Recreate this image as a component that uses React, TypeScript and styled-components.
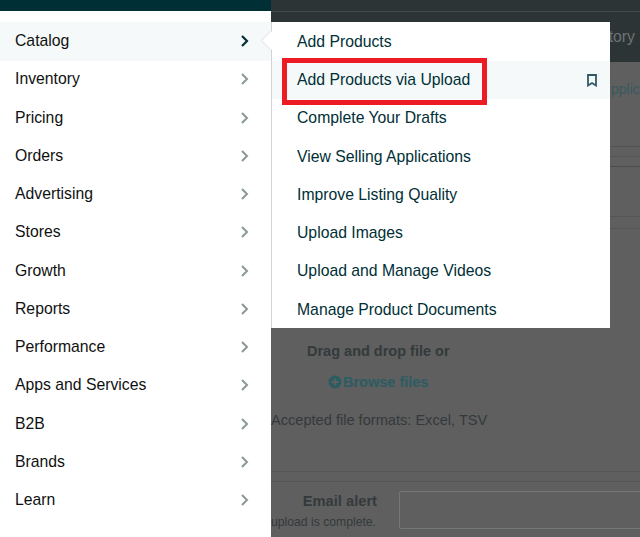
import React from "react";
import styled, { createGlobalStyle } from "styled-components";

const Global = createGlobalStyle`
  html, body { margin: 0; padding: 0; width: 640px; height: 537px; overflow: hidden; background: #5f5f5f; }
  * { box-sizing: border-box; }
  body { font-family: "Liberation Sans", Arial, sans-serif; }
`;

const Page = styled.div`
  position: relative;
  display: flex;
  width: 640px;
  height: 537px;
  overflow: hidden;
`;

const Sidebar = styled.nav`
  flex: 0 0 271px;
  display: flex;
  flex-direction: column;
  background: #fff;
`;

const TopStrip = styled.div`
  height: 11px;
  margin-bottom: 11px;
  background: #002f36;
`;

const NavRow = styled.div<{ $active?: boolean }>`
  height: 38.25px;
  flex: none;
  display: flex;
  align-items: center;
  justify-content: space-between;
  padding: 0 20px 0 15px;
  font-size: 15.75px;
  color: #0f1111;
  background: ${(p) => (p.$active ? "#f5f9f9" : "transparent")};
  box-shadow: ${(p) => (p.$active ? "0 1px 0 #f5f9f9" : "none")};
`;

const Chevron = styled.svg<{ $active?: boolean }>`
  width: 12px;
  height: 14px;
  fill: none;
  stroke: ${(p) => (p.$active ? "#002f36" : "#8a9898")};
  stroke-width: ${(p) => (p.$active ? 2.2 : 2)};
`;

const Backdrop = styled.main`
  flex: 1;
  min-width: 0;
  display: flex;
  flex-direction: column;
  background: #5f5f5f;
`;

const DarkHeader = styled.div`
  height: 62px;
  flex: none;
  background: #2c3436;
  border-top: 11px solid #2c3436;
  position: relative;
  display: flex;
  justify-content: flex-end;
  align-items: center;
  padding: 1px 5px 0 0;
  color: #6c7374;
  font-size: 15.75px;
  &::before {
    content: "";
    position: absolute;
    left: 0;
    right: 0;
    top: 0;
    height: 1px;
    background: #424a4b;
  }
`;

const ApplicLine = styled.div`
  height: 85px;
  flex: none;
  padding: 19px 0 0 340px;
  color: #38585e;
  font-size: 14px;
  line-height: 16px;
  white-space: nowrap;
  overflow: hidden;
  border-bottom: 1px solid #525252;
`;

const Rule = styled.div<{ $h: number; $dark?: boolean }>`
  height: ${(p) => p.$h}px;
  flex: none;
  border-bottom: 1px solid ${(p) => (p.$dark ? "#4c4c4c" : "#555555")};
`;

const Drop = styled.div`
  flex: none;
  height: 242px;
  display: flex;
  flex-direction: column;
  align-items: flex-start;
  padding-top: 114px;
  color: #333a3b;
  font-size: 14.5px;
`;

const DropTitle = styled.div`
  margin-left: 36px;
  font-weight: 700;
  line-height: 16px;
`;

const Browse = styled.div`
  display: flex;
  align-items: center;
  margin: 15px 0 0 57px;
  color: #2a5c62;
  font-weight: 700;
  line-height: 16px;
`;

const PlusIcon = styled.svg`
  width: 14px;
  height: 14px;
  margin-right: 1px;
`;

const Formats = styled.div`
  margin-top: 22px;
  font-size: 14.6px;
  font-weight: 400;
  line-height: 17px;
  white-space: nowrap;
`;

const Divider = styled.div`
  height: 11px;
  flex: none;
  border-top: 1px solid #565656;
  border-bottom: 1px solid #565656;
`;

const AlertRow = styled.div`
  display: flex;
  gap: 16px;
  padding-top: 9px;
`;

const AlertLabel = styled.div`
  flex: 0 0 112px;
  text-align: right;
  color: #333a3b;
  overflow: hidden;
`;

const AlertTitle = styled.div`
  font-size: 14.7px;
  font-weight: 700;
  line-height: 20px;
  padding-right: 6px;
`;

const AlertHint = styled.div`
  font-size: 12.2px;
  line-height: 16px;
  margin-top: 3px;
  white-space: nowrap;
  display: flex;
  justify-content: flex-end;
  padding-right: 7px;
`;

const AlertInput = styled.div`
  flex: 1;
  height: 38px;
  margin-right: -4px;
  border: 1px solid #727878;
  border-radius: 2px;
`;

const Flyout = styled.div`
  position: absolute;
  left: 271px;
  top: 22px;
  width: 339px;
  height: 306px;
  padding-top: 0.85px;
  background: #fff;
  border-left: 1px solid #cfd4d4;
`;

const Pointer = styled.div`
  position: absolute;
  left: -7px;
  top: 12px;
  width: 13px;
  height: 13px;
  background: #fff;
  transform: rotate(45deg);
  box-shadow: -1px 1px 2px rgba(0, 0, 0, 0.08);
`;

const SubRow = styled.div<{ $active?: boolean }>`
  position: relative;
  height: 38.25px;
  display: flex;
  align-items: center;
  justify-content: space-between;
  padding: 0 12px 0 25px;
  font-size: 15.75px;
  color: #002f36;
  background: ${(p) => (p.$active ? "#f5f9f9" : "transparent")};
`;

const BookmarkIcon = styled.svg`
  width: 12px;
  height: 14px;
  fill: none;
  stroke: #2f5a64;
  stroke-width: 1.8;
`;

const Highlight = styled.div`
  position: absolute;
  left: 282px;
  top: 58px;
  width: 205px;
  height: 47px;
  border: 5px solid #ed1c24;
  pointer-events: none;
`;

const nav = ["Catalog","Inventory","Pricing","Orders","Advertising","Stores","Growth","Reports","Performance","Apps and Services","B2B","Brands","Learn"];
const sub = ["Add Products","Add Products via Upload","Complete Your Drafts","View Selling Applications","Improve Listing Quality","Upload Images","Upload and Manage Videos","Manage Product Documents"];

export default function App() {
  return (
    <Page>
      <Global />
      <Sidebar>
        <TopStrip />
        {nav.map((n, i) => (
          <NavRow key={n} $active={i === 0}>
            {n}
            <Chevron $active={i === 0} viewBox="0 0 12 14">
              <path d="M3 2l5 5-5 5" />
            </Chevron>
          </NavRow>
        ))}
      </Sidebar>
      <Backdrop>
        <DarkHeader>tory</DarkHeader>
        <ApplicLine>pplic</ApplicLine>
        <Rule $h={10} />
        <Rule $h={10} $dark />
        <Rule $h={50} />
        <Rule $h={12} />
        <Drop>
          <DropTitle>Drag and drop file or</DropTitle>
          <Browse>
            <PlusIcon viewBox="0 0 14 14">
              <circle cx="7" cy="7" r="6.5" fill="#2a5c62" />
              <path d="M7 3.5v7M3.5 7h7" stroke="#5f5f5f" strokeWidth="1.8" />
            </PlusIcon>
            Browse files
          </Browse>
          <Formats>Accepted file formats: Excel, TSV</Formats>
        </Drop>
        <Divider />
        <AlertRow>
          <AlertLabel>
            <AlertTitle>Email alert</AlertTitle>
            <AlertHint>upload is complete.</AlertHint>
          </AlertLabel>
          <AlertInput />
        </AlertRow>
      </Backdrop>
      <Flyout>
        <Pointer />
        {sub.map((s, i) => (
          <SubRow key={s} $active={i === 1}>
            {s}
            {i === 1 && (
              <BookmarkIcon viewBox="0 0 12 14">
                <path d="M2 2h8v10.5L6 10l-4 2.5z" />
              </BookmarkIcon>
            )}
          </SubRow>
        ))}
      </Flyout>
      <Highlight />
    </Page>
  );
}
